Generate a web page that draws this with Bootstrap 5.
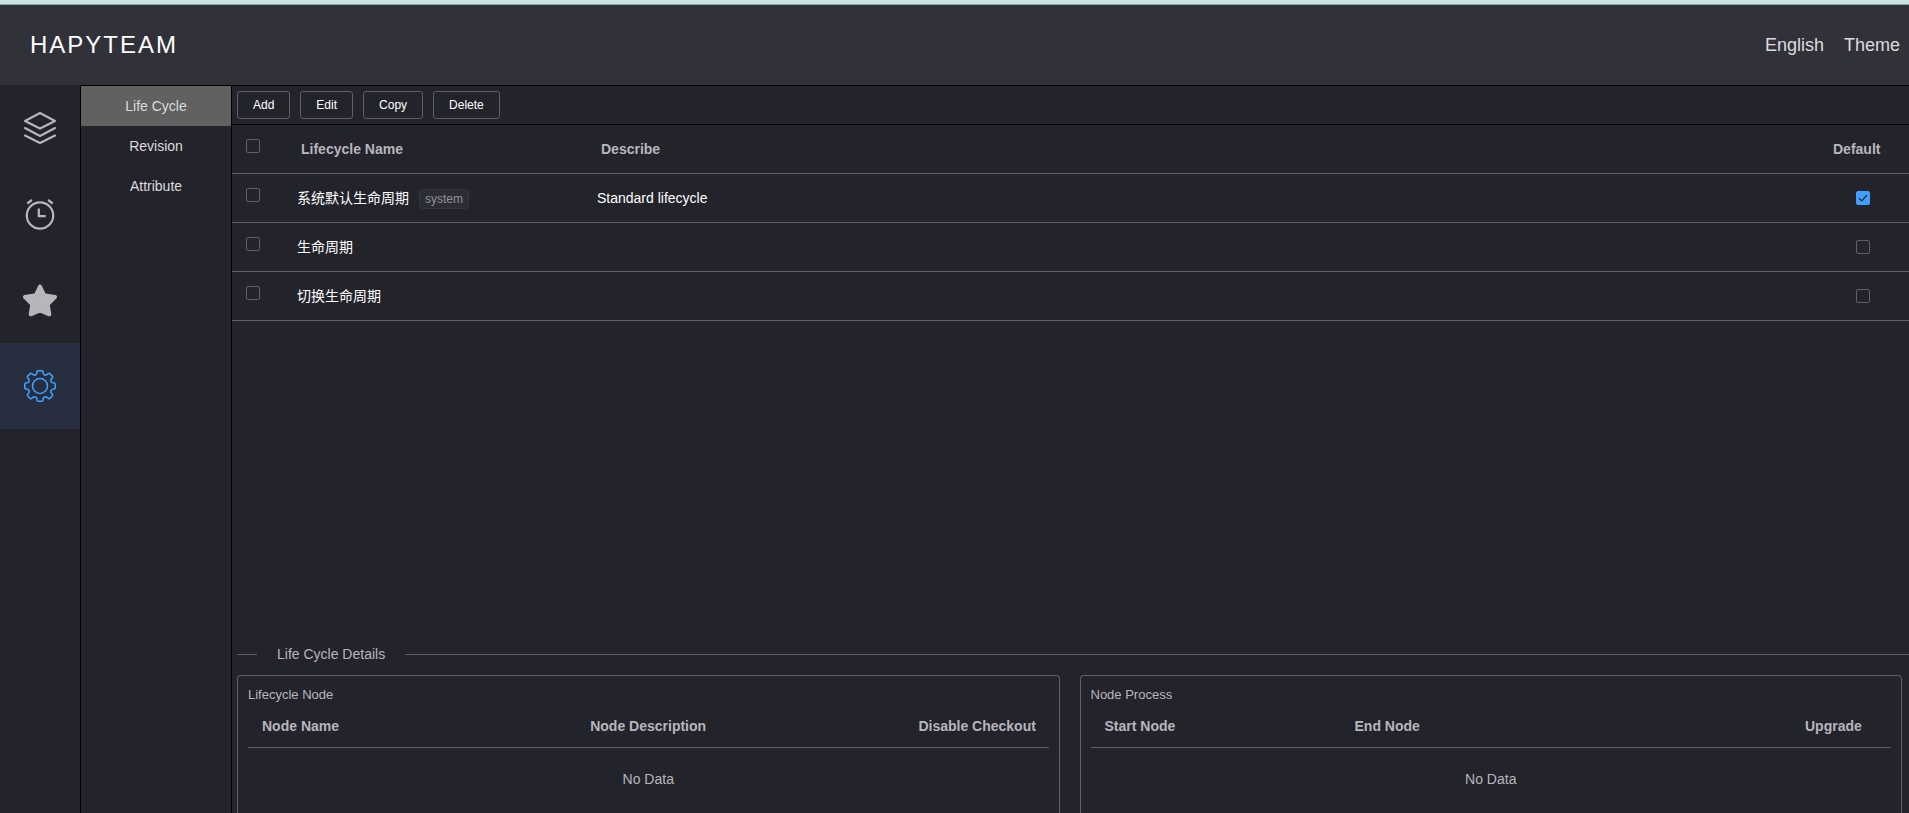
<!DOCTYPE html>
<html lang="en">
<head>
<meta charset="utf-8">
<meta name="viewport" content="width=device-width, initial-scale=1">
<title>HAPYTEAM - Life Cycle</title>
<link href="https://cdn.jsdelivr.net/npm/bootstrap@5.3.0/dist/css/bootstrap.min.css" rel="stylesheet">
<style>
  :root { --ht-bg: #23232c; --ht-head: #31313a; --ht-line: #606060; --ht-muted: #b7b6bb; --ht-blue: #409eff; }
  body { font-family: "Liberation Sans", "Noto Sans CJK SC", sans-serif; font-size: 14px; line-height: 22px; color: #fff; background: var(--ht-bg); }
  a { text-decoration: none; }
  .ht-app { height: 100vh; min-height: 560px; }
  .ht-strip { height: 5px; background: #cbe3e5; border-bottom: 1px solid #93a4a8; }
  .ht-header { height: 80px; background: var(--ht-head); padding: 0 9px 0 30px; }
  .ht-brand { font-size: 24px; letter-spacing: 2px; }
  .ht-links { font-size: 18px; gap: 20px; }
  .ht-links a { color: #dcdcdc; }
  .ht-rail { width: 80px; }
  .ht-rail a { height: 86px; color: var(--ht-muted); }
  .ht-rail a.active { background: #262e40; color: var(--ht-blue); }
  .ht-menu { width: 152px; border: solid #000; border-width: 1px 1px 0; }
  .ht-menu a { height: 40px; color: #dcdcdc; }
  .ht-menu a.active { background: #616161; }
  .ht-main { border-top: 1px solid #000; min-width: 0; }
  .ht-tools { padding: 5px; gap: 10px; border-bottom: 1px solid #000; }
  .ht-tools .btn { --bs-btn-color: #fff; --bs-btn-border-color: var(--ht-line); --bs-btn-font-size: 12px; --bs-btn-padding-x: 15px; --bs-btn-padding-y: 0; --bs-btn-line-height: 26px; --bs-btn-border-radius: 3px; --bs-btn-font-weight: 500; --bs-btn-hover-color: #fff; --bs-btn-hover-border-color: var(--ht-blue); }
  .table { --bs-table-bg: transparent; --bs-table-color: #fff; table-layout: fixed; border-collapse: separate; border-spacing: 0; border-color: var(--ht-line); }
  .table > :not(caption) > * > * { padding: 0 12px; vertical-align: middle; }
  .table th { color: var(--ht-muted); }
  .ht-cycles tr { height: 49px; }
  .table.ht-cycles th { padding-left: 16px; }
  .table.ht-cycles .ht-pick { padding: 14px 0 0 14px; vertical-align: top; }
  .form-check-input { width: 14px; height: 14px; margin: 0; display: block; background-color: transparent; border-color: var(--ht-line); }
  .form-check-input[type=checkbox] { border-radius: 2px; }
  .form-check-input:checked[type=checkbox] { background-color: var(--ht-blue); border-color: var(--ht-blue); background-image: url("data:image/svg+xml,%3csvg xmlns='http://www.w3.org/2000/svg' viewBox='0 0 12 12'%3e%3cpath fill='none' stroke='%2323232c' stroke-width='1.2' d='M2 6.2l2.7 2.7L10 3'/%3e%3c/svg%3e"); }
  .ht-tag { display: inline-block; margin-left: 6px; padding: 0 5px; font-size: 12px; line-height: 18px; color: #909399; background: #2c2c35; border: 1px solid #373740; border-radius: 4px; }
  .ht-details { height: 170px; padding-left: 5px; color: var(--ht-muted); }
  .ht-divider { gap: 20px; margin-bottom: 10px; }
  .ht-divider span { height: 1px; background: var(--ht-line); }
  .ht-divider span:first-child { width: 20px; }
  .ht-divider h2 { font-size: 14px; line-height: 22px; font-weight: 400; }
  .ht-panels { gap: 20px; margin-right: 7px; }
  .ht-panel { flex: 1 1 0; min-width: 0; padding: 10px; border: 1px solid var(--ht-line); border-bottom: 0; border-radius: 4px 4px 0 0; }
  .ht-panel h3 { font-size: 13px; line-height: 18px; font-weight: 400; }
  .ht-panel thead tr { height: 44px; }
  .table.ht-nodes th { padding: 0 14px; }
  .table.ht-nodes td { height: 62px; color: var(--ht-muted); border: 0; }
</style>
</head>
<body>
<div class="ht-app d-flex flex-column overflow-hidden">
  <div class="ht-strip flex-shrink-0"></div>
  <header class="ht-header d-flex align-items-center justify-content-between flex-shrink-0">
    <h1 class="ht-brand m-0 fw-normal">HAPYTEAM</h1>
    <nav class="ht-links d-flex" aria-label="Preferences">
      <a href="#">English</a>
      <a href="#">Theme</a>
    </nav>
  </header>
  <div class="d-flex flex-grow-1 overflow-hidden">
    <nav class="ht-rail flex-shrink-0" aria-label="Sections">
      <a href="#" class="d-flex align-items-center justify-content-center" aria-label="Projects">
        <svg width="34" height="34" viewBox="0 0 34 34" fill="none" stroke="currentColor" stroke-width="2.1" stroke-linejoin="round" stroke-linecap="round"><path d="M17 2l15 8-15 7.500L2 10zM2 17l15 8 15-8M2 24.500l15 7.500 15-7.500"/></svg>
      </a>
      <a href="#" class="d-flex align-items-center justify-content-center" aria-label="Schedule">
        <svg width="34" height="34" viewBox="0 0 34 34" fill="none" stroke="currentColor" stroke-width="2.2"><circle cx="17" cy="18.500" r="13.200"/><path d="M15.800 11.500v7.700h6.900M4.300 6.500l4.600-3.500M29.700 6.500l-4.600-3.500"/></svg>
      </a>
      <a href="#" class="d-flex align-items-center justify-content-center" aria-label="Favorites">
        <svg width="34" height="34" viewBox="0 0 34 34" fill="currentColor" stroke="currentColor" stroke-width="4" stroke-linejoin="round"><path d="M17 3.500l4.200 8.800 10.800 1.700-7.300 7.300 1.600 10-9.300-4-9.300 4 1.600-10L2 14l10.800-1.700z"/></svg>
      </a>
      <a href="#" class="active d-flex align-items-center justify-content-center" aria-label="Settings" aria-current="page">
        <svg width="34" height="34" viewBox="-17 -17 34 34" fill="none" stroke="currentColor" stroke-width="1.6" stroke-linejoin="round"><circle r="7.500"/><path d="M-2-15.200H2Q3-15.200 3-14.200L3.200-12.600Q3.400-11.500 4.600-11.100Q6-10.600 7-11.300L8.300-12.400Q9-13 9.800-12.400L12.400-9.800Q13-9 12.400-8.300L11.300-7Q10.600-6 11.100-4.600Q11.500-3.400 12.600-3.200L14.200-3Q15.200-3 15.200-2V2Q15.200 3 14.200 3L12.600 3.200Q11.500 3.400 11.100 4.600Q10.600 6 11.300 7L12.400 8.300Q13 9 12.400 9.800L9.800 12.400Q9 13 8.300 12.400L7 11.300Q6 10.600 4.600 11.100Q3.400 11.500 3.200 12.600L3 14.200Q3 15.200 2 15.200H-2Q-3 15.200-3 14.200L-3.200 12.600Q-3.400 11.500-4.600 11.100Q-6 10.600-7 11.300L-8.300 12.400Q-9 13-9.800 12.400L-12.400 9.800Q-13 9-12.400 8.300L-11.300 7Q-10.600 6-11.100 4.600Q-11.500 3.400-12.600 3.200L-14.200 3Q-15.200 3-15.200 2V-2Q-15.200-3-14.200-3L-12.600-3.200Q-11.500-3.400-11.100-4.600Q-10.600-6-11.300-7L-12.400-8.300Q-13-9-12.400-9.800L-9.800-12.400Q-9-13-8.300-12.400L-7-11.300Q-6-10.600-4.600-11.100Q-3.400-11.500-3.200-12.600L-3-14.200Q-3-15.200-2-15.200Z"/></svg>
      </a>
    </nav>
    <nav class="ht-menu flex-shrink-0" aria-label="Settings pages">
      <a href="#" class="active d-flex align-items-center justify-content-center" aria-current="page">Life Cycle</a>
      <a href="#" class="d-flex align-items-center justify-content-center">Revision</a>
      <a href="#" class="d-flex align-items-center justify-content-center">Attribute</a>
    </nav>
    <main class="ht-main flex-grow-1 d-flex flex-column">
      <div class="ht-tools d-flex">
        <button type="button" class="btn">Add</button>
        <button type="button" class="btn">Edit</button>
        <button type="button" class="btn">Copy</button>
        <button type="button" class="btn">Delete</button>
      </div>
      <div class="flex-grow-1 overflow-hidden">
        <table class="table ht-cycles m-0">
          <colgroup><col style="width:53px"><col style="width:300px"><col><col style="width:92px"></colgroup>
          <thead>
            <tr>
              <th class="ht-pick"><input class="form-check-input" type="checkbox" aria-label="Select all"></th>
              <th scope="col">Lifecycle Name</th>
              <th scope="col">Describe</th>
              <th scope="col">Default</th>
            </tr>
          </thead>
          <tbody>
            <tr>
              <td class="ht-pick"><input class="form-check-input" type="checkbox" aria-label="Select 系统默认生命周期"></td>
              <td>系统默认生命周期 <span class="ht-tag">system</span></td>
              <td>Standard lifecycle</td>
              <td><input class="form-check-input mx-auto" type="checkbox" checked aria-label="Default"></td>
            </tr>
            <tr>
              <td class="ht-pick"><input class="form-check-input" type="checkbox" aria-label="Select 生命周期"></td>
              <td>生命周期</td>
              <td></td>
              <td><input class="form-check-input mx-auto" type="checkbox" aria-label="Default"></td>
            </tr>
            <tr>
              <td class="ht-pick"><input class="form-check-input" type="checkbox" aria-label="Select 切换生命周期"></td>
              <td>切换生命周期</td>
              <td></td>
              <td><input class="form-check-input mx-auto" type="checkbox" aria-label="Default"></td>
            </tr>
          </tbody>
        </table>
      </div>
      <section class="ht-details d-flex flex-column flex-shrink-0 overflow-hidden">
        <div class="ht-divider d-flex align-items-center">
          <span></span><h2 class="m-0">Life Cycle Details</h2><span class="flex-grow-1"></span>
        </div>
        <div class="ht-panels d-flex flex-grow-1">
          <section class="ht-panel">
            <h3 class="m-0">Lifecycle Node</h3>
            <table class="table ht-nodes m-0">
              <colgroup><col style="width:41%"><col style="width:41%"><col style="width:18%"></colgroup>
              <thead><tr><th scope="col">Node Name</th><th scope="col">Node Description</th><th scope="col" class="text-nowrap">Disable Checkout</th></tr></thead>
              <tbody><tr><td colspan="3" class="text-center">No Data</td></tr></tbody>
            </table>
          </section>
          <section class="ht-panel">
            <h3 class="m-0">Node Process</h3>
            <table class="table ht-nodes m-0">
              <colgroup><col style="width:250px"><col><col style="width:100px"></colgroup>
              <thead><tr><th scope="col">Start Node</th><th scope="col">End Node</th><th scope="col">Upgrade</th></tr></thead>
              <tbody><tr><td colspan="3" class="text-center">No Data</td></tr></tbody>
            </table>
          </section>
        </div>
      </section>
    </main>
  </div>
</div>
<script src="https://cdn.jsdelivr.net/npm/bootstrap@5.3.0/dist/js/bootstrap.bundle.min.js"></script>
</body>
</html>
